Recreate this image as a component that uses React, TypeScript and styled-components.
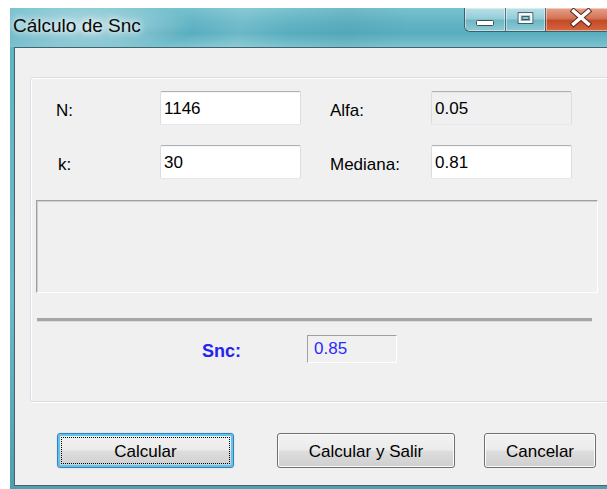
import React from "react";
import styled, { createGlobalStyle, css } from "styled-components";

const GlobalStyle = createGlobalStyle`
  html, body {
    margin: 0;
    padding: 0;
    background: #ffffff;
    overflow: hidden;
  }
  body {
    font-family: "Liberation Sans", Arial, sans-serif;
    font-size: 17px;
    color: #000;
  }
`;

const Page = styled.div`
  width: 607px;
  height: 489px;
  padding: 8px 0 0 10px;
  box-sizing: border-box;
  overflow: hidden;
`;

const Window = styled.div`
  width: 610px;
  height: 481px;
  box-sizing: border-box;
  display: flex;
  flex-direction: column;
  padding-bottom: 3px;
  background: linear-gradient(180deg, #74bfcc 0%, #62b4c3 8%, #6dbac8 60%, #4f9fb1 100%);
`;

const TitleBar = styled.div`
  height: 39px;
  flex: none;
  display: flex;
  align-items: flex-start;
  background:
    radial-gradient(ellipse 110px 26px at 75px 18px, rgba(255, 255, 255, 0.55), rgba(255, 255, 255, 0) 100%),
    linear-gradient(105deg, rgba(255, 255, 255, 0) 30%, rgba(255, 255, 255, 0.12) 38%, rgba(255, 255, 255, 0) 46%,
      rgba(0, 60, 80, 0.06) 55%, rgba(255, 255, 255, 0) 65%),
    linear-gradient(180deg, #79c2cf 0%, #63b5c5 35%, #58adbf 65%, #7cc4d0 100%);
`;

const Title = styled.div`
  padding: 7px 0 0 3px;
  line-height: 22px;
  font-size: 19px;
  color: #0a0a0a;
  text-shadow: 0 0 6px #ffffff, 0 0 10px rgba(255, 255, 255, 0.8);
`;

const CaptionGroup = styled.div`
  margin-left: auto;
  margin-right: 6px;
  display: flex;
  height: 24px;
  border: 1px solid #3f5f6a;
  border-top: none;
  border-radius: 0 0 6px 6px;
  overflow: hidden;
  box-sizing: border-box;
`;

const CaptionButton = styled.div<{ $w: number; $close?: boolean }>`
  width: ${(p) => p.$w}px;
  height: 100%;
  display: flex;
  align-items: flex-start;
  justify-content: center;
  box-sizing: border-box;
  border-left: 1px solid rgba(50, 80, 90, 0.7);
  box-shadow: inset 0 0 0 1px rgba(255, 255, 255, 0.45);
  &:first-child {
    border-left: none;
  }
  ${(p) =>
    p.$close
      ? css`
          background: linear-gradient(180deg, #e6a28c 0%, #d47355 45%, #c24a28 55%, #d8673f 100%);
        `
      : css`
          background: linear-gradient(180deg, #b9e0e7 0%, #96cdd8 45%, #6fb7c6 55%, #8fcad5 100%);
        `}
`;

const ClientArea = styled.div`
  flex: 1;
  margin: 0 4px;
  border: 1px solid #45636c;
  background: #f0f0f0;
  display: flex;
  flex-direction: column;
`;

const GroupBox = styled.div`
  margin: 29px 0 0 15px;
  width: 582px;
  box-sizing: border-box;
  border: 1px solid #d5dfe5;
  border-radius: 3px;
  box-shadow: inset 1px 1px 0 #ffffff, 1px 1px 0 #ffffff;
  padding: 13px 0 38px 5px;
  display: flex;
  flex-direction: column;
`;

const FieldGrid = styled.div`
  margin-left: 20px;
  display: grid;
  grid-template-columns: 104px 170px 101px 141px;
  grid-auto-rows: 34px;
  row-gap: 20px;
  align-items: center;
`;

const Label = styled.span<{ $nudge?: number }>`
  padding: 5px 0 0 ${(p) => p.$nudge ?? 0}px;
  white-space: nowrap;
`;

const TextBox = styled.div<{ $readOnly?: boolean }>`
  width: 141px;
  height: 34px;
  box-sizing: border-box;
  display: flex;
  align-items: center;
  padding: 2px 0 0 3px;
  border: 1px solid #d9dde3;
  border-top-color: #adb0b6;
  border-bottom-color: #e3e8ee;
  border-radius: 2px;
  box-shadow: inset 0 1px 0 rgba(0, 0, 0, 0.04);
  background: ${(p) => (p.$readOnly ? "#f0f0f0" : "#ffffff")};
`;

const SunkenPanel = styled.div`
  margin-top: 21px;
  width: 562px;
  height: 93px;
  box-sizing: border-box;
  border: 1px solid #ffffff;
  border-top-color: #a0a0a0;
  border-left-color: #a0a0a0;
  box-shadow: inset 1px 1px 0 #cfcfcf;
`;

const Separator = styled.div`
  margin: 25px 0 0 1px;
  width: 555px;
  height: 3px;
  background: #a6a6a6;
  box-shadow: 0 1px 0 #dadada;
`;

const ResultRow = styled.div`
  margin-top: 14px;
  padding-left: 166px;
  display: flex;
  align-items: center;
  height: 28px;
`;

const ResultLabel = styled.span`
  width: 105px;
  padding-top: 5px;
  font-size: 18px;
  font-weight: bold;
  color: #2424f0;
`;

const ResultBox = styled.div`
  width: 90px;
  height: 28px;
  box-sizing: border-box;
  display: flex;
  align-items: center;
  padding: 0 0 1px 6px;
  border: 1px solid #ffffff;
  border-top-color: #a0a0a0;
  border-left-color: #a0a0a0;
  color: #2a2aff;
`;

const ButtonRow = styled.div`
  margin: 31px 0 0 42px;
  display: flex;
`;

const PushButton = styled.div<{ $w: number; $offset?: number; $default?: boolean }>`
  position: relative;
  width: ${(p) => p.$w}px;
  height: 35px;
  margin-left: ${(p) => p.$offset ?? 0}px;
  box-sizing: border-box;
  display: flex;
  align-items: center;
  justify-content: center;
  padding-top: 2px;
  border-radius: 3px;
  border: 1px solid #707070;
  box-shadow: inset 0 0 0 1px #fbfbfb;
  background: linear-gradient(180deg, #f2f2f2 0%, #ebebeb 48%, #dddddd 52%, #cfcfcf 100%);
  ${(p) =>
    p.$default &&
    css`
      border-color: #3c7fb1;
      box-shadow: inset 0 0 0 2px #5fc2ef, 0 0 1px #5fc2ef;
      &::after {
        content: "";
        position: absolute;
        inset: 3px;
        border: 1px dotted #000;
      }
    `}
`;

const MinimizeGlyph = () => (
  <svg width="40" height="24" viewBox="0 0 40 24">
    <rect x="11.5" y="12.5" width="17" height="5" rx="1" fill="#ffffff" stroke="#3c4f56" strokeWidth="1" />
  </svg>
);

const MaximizeGlyph = () => (
  <svg width="40" height="24" viewBox="0 0 40 24">
    <rect x="12.5" y="4.5" width="15" height="11" fill="none" stroke="#3c4f56" strokeWidth="1" />
    <rect x="14" y="6" width="12" height="8" fill="none" stroke="#ffffff" strokeWidth="2" />
    <rect x="16.5" y="8.5" width="7" height="3" fill="none" stroke="#3c4f56" strokeWidth="1" />
  </svg>
);

const CloseGlyph = () => (
  <svg width="68" height="24" viewBox="0 0 68 24">
    <path d="M28 3 L43 16 M43 3 L28 16" stroke="#5a2a1e" strokeWidth="5.5" strokeLinecap="square" />
    <path d="M28 3 L43 16 M43 3 L28 16" stroke="#ffffff" strokeWidth="3.5" strokeLinecap="square" />
  </svg>
);

export default function App() {
  return (
    <>
      <GlobalStyle />
      <Page>
        <Window>
          <TitleBar>
            <Title>Cálculo de Snc</Title>
            <CaptionGroup>
              <CaptionButton $w={40}>
                <MinimizeGlyph />
              </CaptionButton>
              <CaptionButton $w={40}>
                <MaximizeGlyph />
              </CaptionButton>
              <CaptionButton $w={68} $close>
                <CloseGlyph />
              </CaptionButton>
            </CaptionGroup>
          </TitleBar>
          <ClientArea>
            <GroupBox>
              <FieldGrid>
                <Label>N:</Label>
                <TextBox>1146</TextBox>
                <Label>Alfa:</Label>
                <TextBox $readOnly>0.05</TextBox>
                <Label $nudge={2}>k:</Label>
                <TextBox>30</TextBox>
                <Label>Mediana:</Label>
                <TextBox>0.81</TextBox>
              </FieldGrid>
              <SunkenPanel />
              <Separator />
              <ResultRow>
                <ResultLabel>Snc:</ResultLabel>
                <ResultBox>0.85</ResultBox>
              </ResultRow>
            </GroupBox>
            <ButtonRow>
              <PushButton $w={177} $default>
                Calcular
              </PushButton>
              <PushButton $w={178} $offset={43}>
                Calcular y Salir
              </PushButton>
              <PushButton $w={112} $offset={29}>
                Cancelar
              </PushButton>
            </ButtonRow>
          </ClientArea>
        </Window>
      </Page>
    </>
  );
}
